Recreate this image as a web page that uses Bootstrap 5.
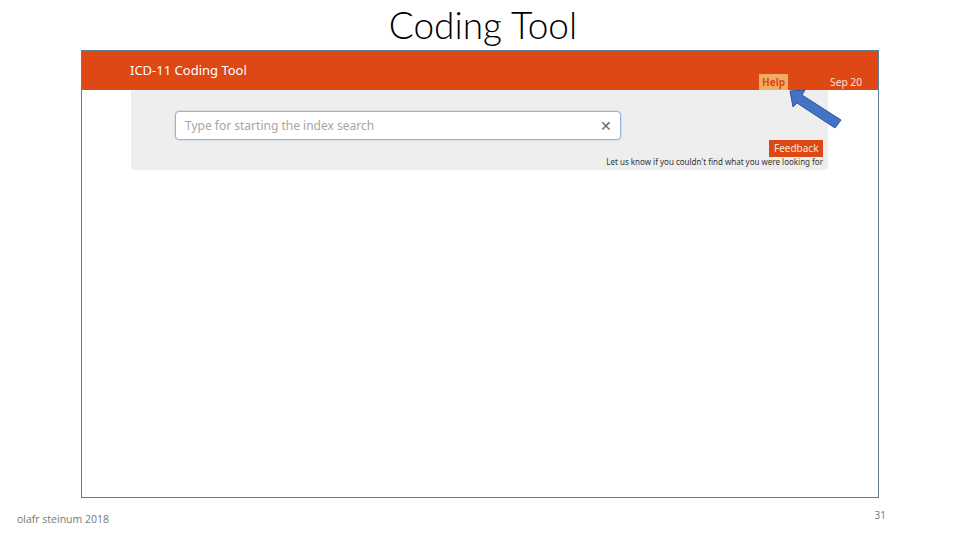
<!DOCTYPE html>
<html lang="en">
<head>
    <meta charset="UTF-8">
    <title>Coding Tool</title>
    <link href="https://cdn.jsdelivr.net/npm/bootstrap@5.3.0/dist/css/bootstrap.min.css" rel="stylesheet">
    <style>
        body { width: 960px; height: 540px; overflow: hidden; background: #fff; position: relative; }
        .slide-title { font-family: "Lato", sans-serif; font-weight: 300; font-size: 37px; line-height: 50px; height: 50px; color: #000; padding-left: 6px; }
        .slide-frame { width: 798px; height: 448px; margin-left: 81px; border: 1.5px solid #5f7d95; position: relative; }
        .tool-bar { height: 39px; background: #dd4814; padding-left: 48px; padding-right: 16px; font-family: "Noto Sans", sans-serif; color: #fff; }
        .tool-brand { font-size: 13px; font-weight: 400; line-height: 39px; }
        .help-tab { width: 29px; height: 16px; background: #f0ad63; color: #dd4814; font-size: 10px; font-weight: 700; line-height: 16px; text-align: center; margin-right: 42px; }
        .date-txt { font-size: 10.2px; line-height: 16px; color: #fbe3da; }
        .search-panel { width: 697px; height: 80px; margin-left: 49px; background: #eeeeee; border-radius: 0 0 4px 4px; font-family: "Noto Sans", sans-serif; overflow: hidden; padding: 21px 5px 0 44px; }
        .search-box { width: 446px; height: 29px; background: #fff; border: 1px solid #8fb4d9; border-radius: 4px; padding: 0 9px 0 9px; color: #a6a6a6; font-size: 12px; box-shadow: 0 0 2px #a9c6e4; }
        .clear-x { color: #666; font-size: 14px; margin-right: -1px; }
        .feedback-btn { background: #dd4814; color: #fbe3da; font-size: 10px; height: 17px; line-height: 17px; padding: 0 4.5px; }
        .feedback-note { font-size: 8px; line-height: 12px; color: #333; white-space: nowrap; margin-top: -1px; }
        .foot-left { font-family: "Open Sans", sans-serif; font-size: 10.5px; color: #777; padding-left: 17px; margin-top: -2px; }
        .foot-num { font-family: "Open Sans", sans-serif; font-size: 10px; color: #777; padding-right: 74px; margin-top: -6px; }
        .arrow-over { position: absolute; left: 785px; top: 85px; }
    </style>
</head>
<body>
    <div class="slide-title text-center">Coding Tool</div>
    <div class="slide-frame">
        <div class="tool-bar d-flex align-items-end">
            <div class="tool-brand align-self-start flex-grow-1">ICD-11 Coding Tool</div>
            <div class="help-tab">Help</div>
            <div class="date-txt">Sep 20</div>
        </div>
        <div class="search-panel">
            <div class="search-box d-flex align-items-center justify-content-between">
                <span>Type for starting the index search</span>
                <span class="clear-x">&#10005;</span>
            </div>
            <div class="d-flex flex-column align-items-end">
                <div class="feedback-btn">Feedback</div>
                <div class="feedback-note">Let us know if you couldn't find what you were looking for</div>
            </div>
        </div>
    </div>
    <div class="d-flex justify-content-between align-items-start mt-3">
        <div class="foot-left">olafr steinum 2018</div>
        <div class="foot-num">31</div>
    </div>
    <svg class="arrow-over" width="60" height="46" viewBox="0 0 60 46">
        <polygon points="5,6 20,5 17,10 56,35 50,43 12,18 8,22" fill="#4472c4" stroke="#2f5597" stroke-width="1"/>
    </svg>
</body>
</html>
